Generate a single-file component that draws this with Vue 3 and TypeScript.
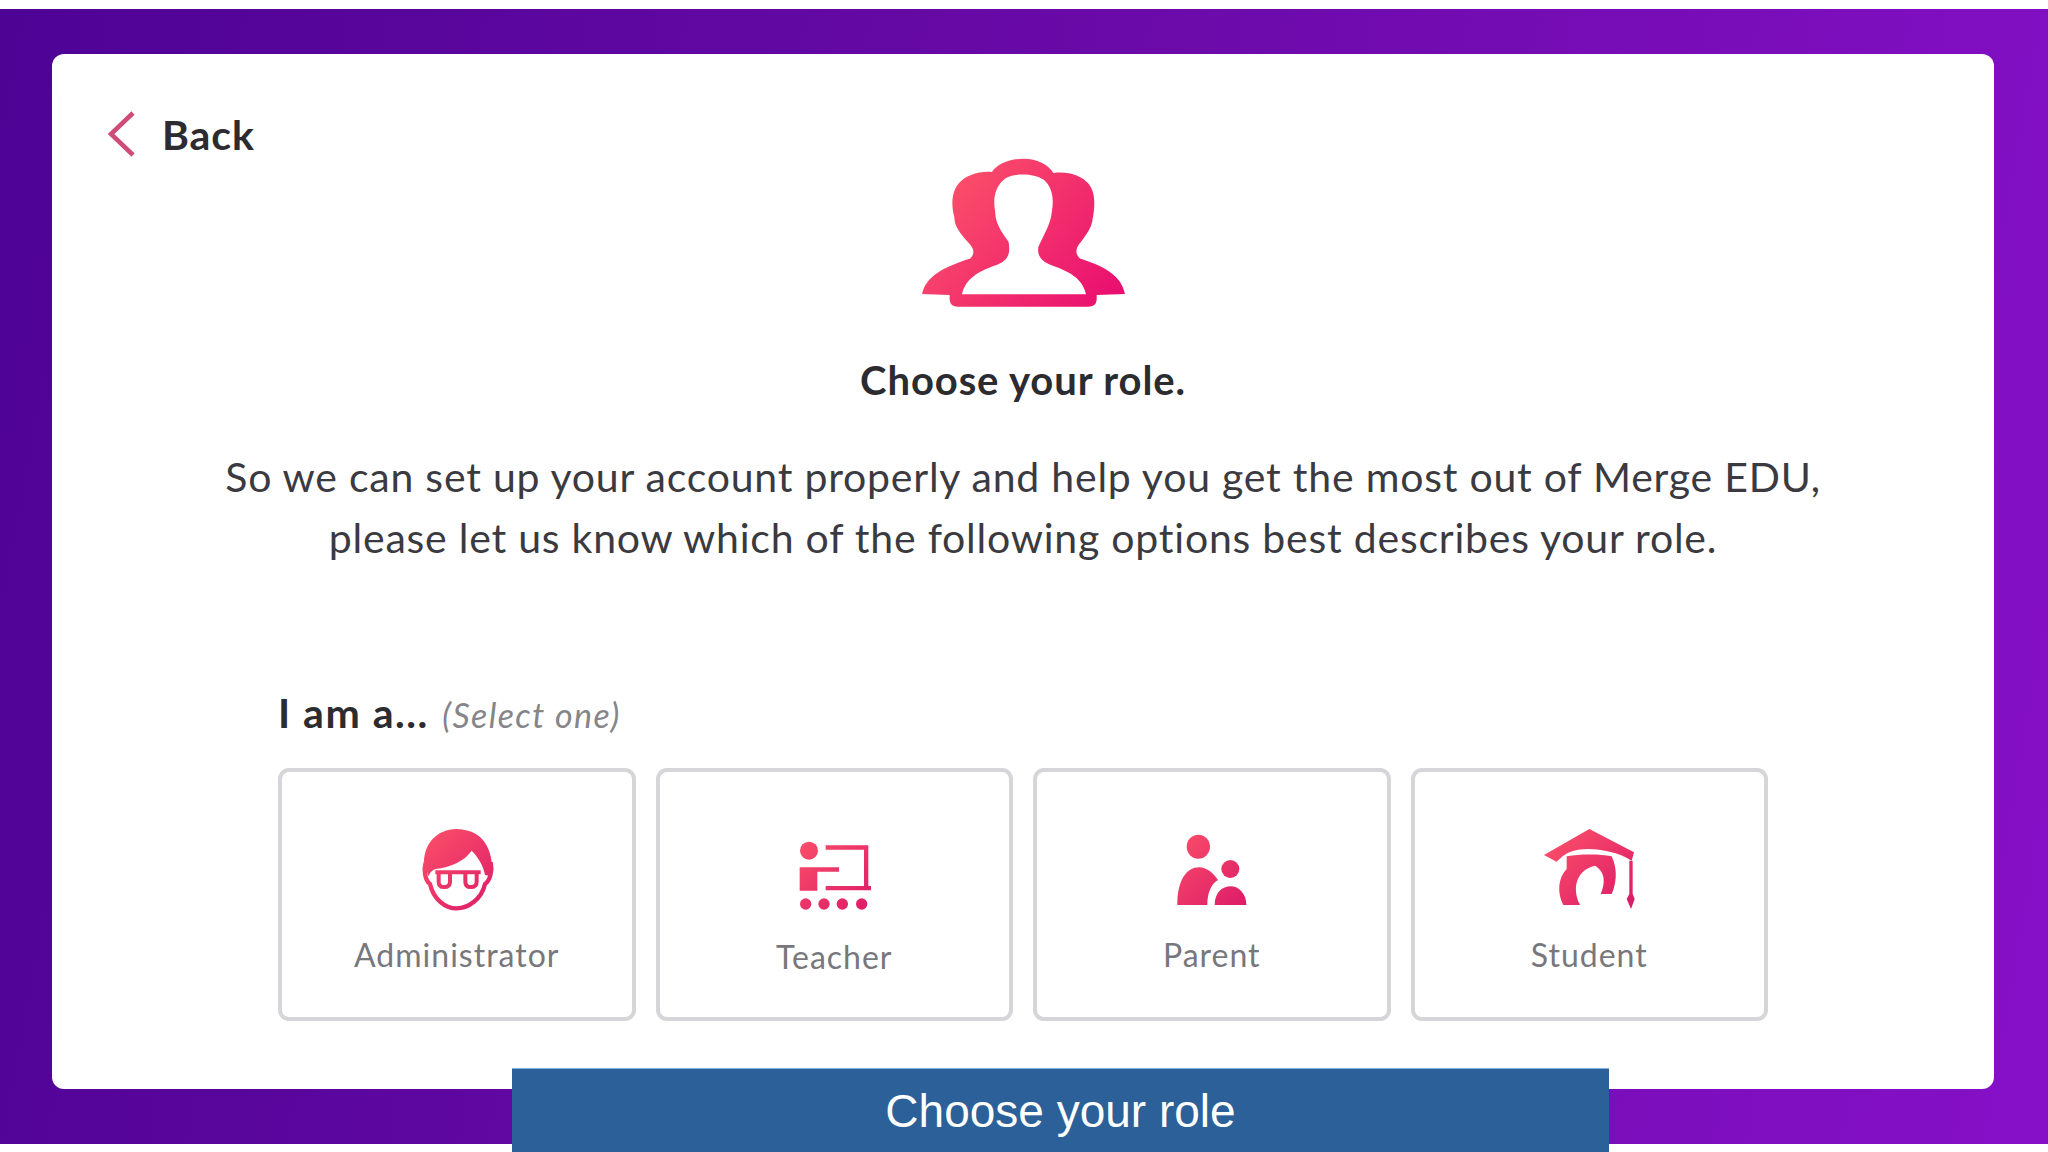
<script setup lang="ts">
type Role = {
  key: 'admin' | 'teacher' | 'parent' | 'student'
  label: string
  viewBox: string
}

// viewBox x is nudged per icon, the glyphs don't sit centred in their tiles
const roles: Role[] = [
  { key: 'admin', label: 'Administrator', viewBox: '-9 0 360 300' },
  { key: 'teacher', label: 'Teacher', viewBox: '-15 0 360 300' },
  { key: 'parent', label: 'Parent', viewBox: '9 0 360 300' },
  { key: 'student', label: 'Student', viewBox: '-3 0 360 300' },
]
</script>

<template>
  <main class="page">
    <section class="panel">
      <a class="back" href="#">
        <svg class="chevron" viewBox="0 0 27 46" aria-hidden="true">
          <path d="M25 2 L3 23 L25 44" />
        </svg>
        <span>Back</span>
      </a>

      <svg class="hero-icon" viewBox="120 50 620 460" aria-hidden="true">
        <defs>
          <linearGradient id="hero-grad" gradientUnits="userSpaceOnUse" x1="200" y1="120" x2="680" y2="500">
            <stop offset="0" stop-color="#fb5069" />
            <stop offset="1" stop-color="#e90f70" />
          </linearGradient>
        </defs>
        <path
          fill="url(#hero-grad)"
          fill-rule="evenodd"
          d="M125 462 C135 410 190 380 270 355 C285 340 282 325 262 305 C240 280 222 260 222 230 C212 195 214 155 235 130 C255 106 295 92 335 95 C350 70 390 55 430 55 C470 55 505 72 520 98 C565 92 605 106 625 130 C646 155 646 195 638 235 C636 262 618 285 603 305 C585 325 585 342 600 355 C670 378 725 405 735 462 L650 465 L650 480 Q648 500 625 500 L232 500 Q210 500 208 480 L208 465 Z M245 463 C255 415 300 392 340 378 C382 364 392 345 385 305 C365 275 345 250 345 215 C338 180 342 140 375 115 C400 98 460 98 490 118 C518 140 522 180 515 215 C512 250 495 275 475 320 C470 345 482 364 520 378 C565 394 608 415 618 463 Z"
        />
      </svg>

      <h1 class="title">Choose your role.</h1>
      <p class="intro">
        So we can set up your account properly and help you get the most out of Merge EDU,<br />
        please let us know which of the following options best describes your role.
      </p>

      <div class="roles">
        <p class="roles-label">I am a... <em>(Select one)</em></p>

        <svg class="defs" aria-hidden="true">
          <defs>
            <linearGradient id="role-grad" gradientUnits="userSpaceOnUse" x1="70" y1="40" x2="290" y2="270">
              <stop offset="0" stop-color="#fb5069" />
              <stop offset="1" stop-color="#dc1a68" />
            </linearGradient>
          </defs>
        </svg>

        <div class="role-grid">
          <button v-for="role in roles" :key="role.key" class="role-card" :class="role.key" type="button">
            <svg class="role-icon" :viewBox="role.viewBox" aria-hidden="true">
              <g v-if="role.key === 'admin'">
                <path
                  fill="url(#role-grad)"
                  d="M170 30 C110 30 72 75 72 130 L85 172 C90 160 97 153 107 150 C150 146 195 125 215 95 C235 115 250 140 255 168 L275 172 C282 110 262 32 170 30 Z"
                />
                <path
                  fill="none"
                  stroke="url(#role-grad)"
                  stroke-width="13"
                  d="M77 130 C70 155 76 185 90 195 C100 240 135 268 170 268 C205 268 245 240 255 195 C270 185 278 155 272 130"
                />
                <path
                  fill="none"
                  stroke="url(#role-grad)"
                  stroke-width="12"
                  d="M106 160 H242 M116 160 V188 Q116 204 132 204 Q150 204 150 188 V160 M196 160 V188 Q196 204 212 204 Q230 204 230 188 V160"
                />
              </g>
              <g v-else-if="role.key === 'teacher'" fill="url(#role-grad)">
                <circle cx="90" cy="95" r="27" />
                <path d="M62 145 H180 V158 H115 V215 H62 Z" />
                <path d="M140 79 H268 V201 H276 V214 H140 V201 H255 V92 H140 Z" />
                <circle cx="80" cy="255" r="17" />
                <circle cx="135" cy="255" r="17" />
                <circle cx="190" cy="255" r="17" />
                <circle cx="248" cy="255" r="17" />
              </g>
              <g v-else-if="role.key === 'parent'" fill="url(#role-grad)">
                <ellipse cx="148" cy="83" rx="35" ry="36" />
                <path d="M85 258 C85 180 115 145 150 145 C175 145 195 165 207 183 C185 195 175 225 175 258 Z" />
                <circle cx="244" cy="150" r="27" />
                <path d="M197 258 C197 220 220 202 245 202 C270 202 292 225 292 258 Z" />
              </g>
              <g v-else fill="url(#role-grad)">
                <path d="M42 108 L178 30 L312 100 L305 125 C270 102 215 90 175 90 C130 90 105 102 80 128 Z" />
                <path d="M298 125 H308 V225 L314 240 L303 270 L290 240 L298 225 Z" />
                <path d="M110 112 C150 105 210 105 245 112 C258 140 265 180 245 225 L212 225 C225 195 228 160 195 140 C150 150 120 195 150 258 L100 258 C80 220 85 175 110 150 Z" />
              </g>
            </svg>
            <span class="role-name">{{ role.label }}</span>
          </button>
        </div>
      </div>
    </section>

    <div class="caption">Choose your role</div>
  </main>
</template>

<style scoped>
.page {
  position: relative;
  height: 1152px;
  overflow: hidden;
  padding: 9px 0 8px;
  box-sizing: border-box;
}

.panel {
  height: 100%;
  box-sizing: border-box;
  padding: 45px 54px 55px 52px;
  background: linear-gradient(100deg, #4e0395 0%, #6a0aa8 50%, #8610c8 100%);
  display: flex;
  flex-direction: column;
  font-family: Lato, 'Liberation Sans', sans-serif;
  color: #2b2b30;
  position: relative;
}

.panel::before {
  content: '';
  position: absolute;
  inset: 45px 54px 55px 52px;
  background: #fff;
  border-radius: 12px;
}

.panel > * {
  position: relative;
}

.back {
  display: flex;
  align-items: center;
  gap: 27px;
  height: 46px;
  margin: 57px 0 0 56px;
  color: inherit;
  text-decoration: none;
  font-size: 41px;
  font-weight: 700;
  letter-spacing: 0.9px;
}

.chevron {
  width: 27px;
  height: 46px;
  flex: none;
}

.chevron path {
  fill: none;
  stroke: #cf4c78;
  stroke-width: 4.5;
}

.hero-icon {
  display: block;
  width: 207px;
  height: 153px;
  margin: 0 auto;
}

.title {
  margin: 46px 0 0;
  font-size: 40px;
  line-height: 48px;
  font-weight: 700;
  letter-spacing: 0.9px;
  text-align: center;
}

.intro {
  margin: 42px 0 0;
  font-size: 41px;
  line-height: 61px;
  font-weight: 400;
  letter-spacing: 0.77px;
  color: #3a3a40;
  text-align: center;
}

.roles {
  margin: 121px 0 0 226px;
  width: 1490px;
}

.roles-label {
  margin: 0;
  font-size: 41px;
  line-height: 48px;
  font-weight: 700;
  letter-spacing: 1.5px;
}

.roles-label em {
  margin-left: 2px;
  font-size: 34px;
  font-weight: 400;
  letter-spacing: 1.4px;
  color: #85858a;
}

.defs {
  position: absolute;
  width: 0;
  height: 0;
}

.role-grid {
  display: grid;
  grid-template-columns: repeat(4, 1fr);
  gap: 20px;
  margin-top: 29px;
}

.role-card {
  height: 253px;
  box-sizing: border-box;
  padding: 47px 0 0;
  border: 4px solid #d6d6da;
  border-radius: 11px;
  background: #fff;
  display: flex;
  flex-direction: column;
  align-items: center;
  font-family: inherit;
}

.role-icon {
  display: block;
  width: 120px;
  height: 100px;
  flex: none;
}

.role-name {
  margin-top: 16px;
  font-size: 32px;
  line-height: 40px;
  font-weight: 400;
  letter-spacing: 1px;
  color: #77777c;
}

.teacher .role-name {
  margin-top: 18px;
}

.caption {
  position: absolute;
  left: 512px;
  bottom: 0;
  width: 1097px;
  height: 84px;
  box-sizing: border-box;
  border-top: 1px solid #7fb0e0;
  background: #2b6099;
  color: #fff;
  font-family: 'Liberation Sans', Arial, sans-serif;
  font-size: 46px;
  line-height: 85px;
  text-align: center;
}
</style>

<style>
body {
  background: #fff;
}
</style>
